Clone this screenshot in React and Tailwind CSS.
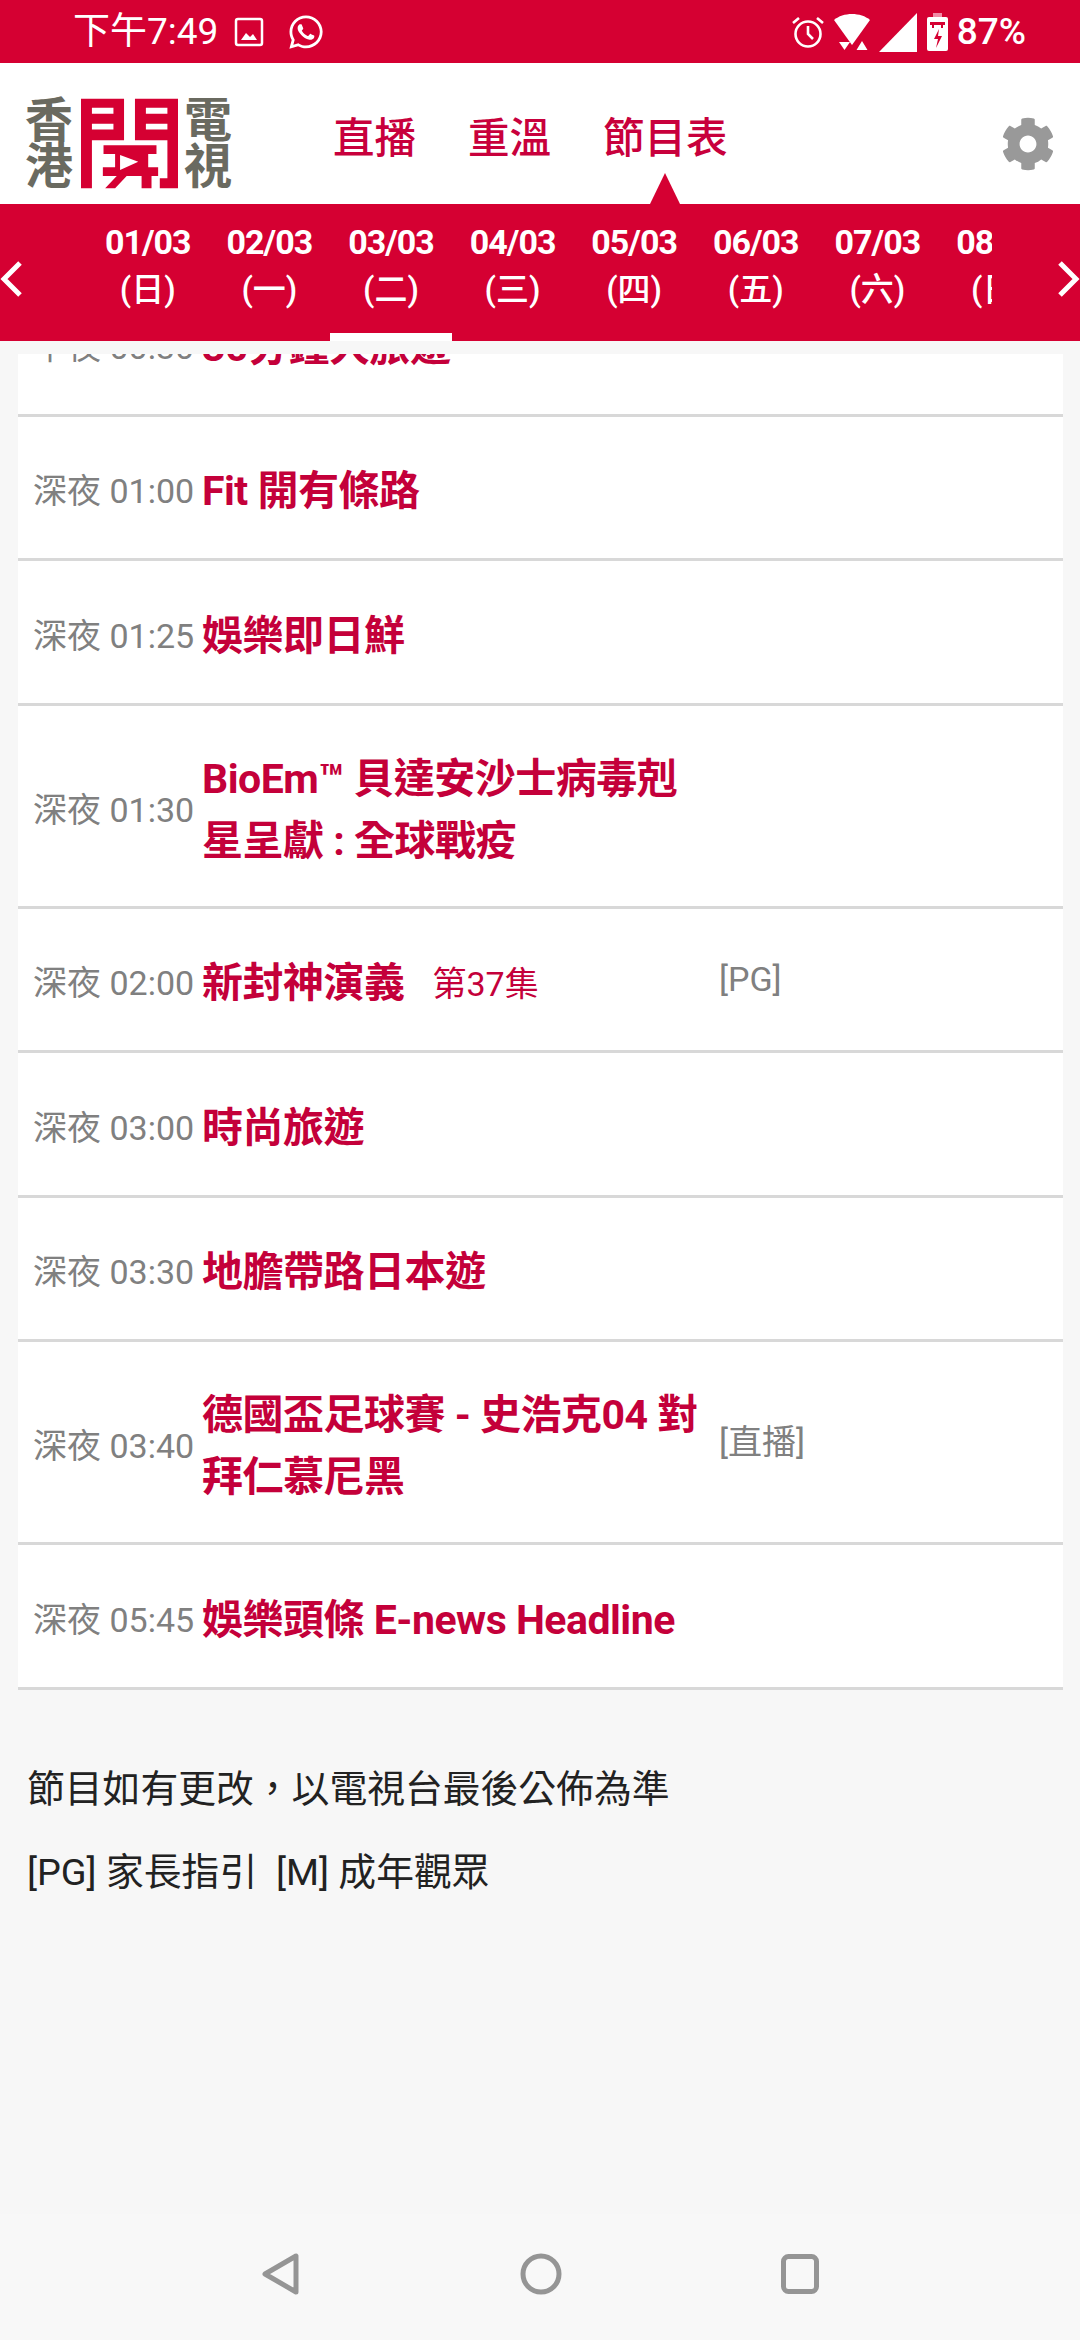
import React from 'react';
import { FaCog, FaWhatsapp } from 'react-icons/fa';

const FONT = '[font-family:Roboto,"Noto_Sans_CJK_TC",sans-serif]';

const DATES = [
  { date: '01/03', day: '(日)' },
  { date: '02/03', day: '(一)' },
  { date: '03/03', day: '(二)', active: true },
  { date: '04/03', day: '(三)' },
  { date: '05/03', day: '(四)' },
  { date: '06/03', day: '(五)' },
  { date: '07/03', day: '(六)' },
  { date: '08/03', day: '(日)' },
];

const ROWS = [
  { time: '午夜 00:30', title: '30分鐘大旅遊' },
  { time: '深夜 01:00', title: 'Fit 開有條路' },
  { time: '深夜 01:25', title: '娛樂即日鮮' },
  { time: '深夜 01:30', title: 'BioEm™ 貝達安沙士病毒剋星呈獻 : 全球戰疫', tall: true },
  { time: '深夜 02:00', title: '新封神演義', episode: '第37集', tag: '[PG]' },
  { time: '深夜 03:00', title: '時尚旅遊' },
  { time: '深夜 03:30', title: '地膽帶路日本遊' },
  { time: '深夜 03:40', title: '德國盃足球賽 - 史浩克04 對拜仁慕尼黑', tag: '[直播]', tall: true },
  { time: '深夜 05:45', title: '娛樂頭條 E-news Headline' },
];

const StatusBar = () => (
  <div className="flex h-[63px] items-center bg-[#d50032] pl-[73px] pr-[54px] text-white">
    <span className="text-[37px] leading-none">下午7:49</span>
    <svg className="ml-[16px] h-[30px] w-[30px]" viewBox="0 0 30 30">
      <rect x="2" y="2" width="26" height="26" rx="2" fill="none" stroke="white" strokeWidth="2.5" />
      <path d="M7 23l5-7 4 4 3-3 4 6z" fill="white" />
    </svg>
    <FaWhatsapp className="ml-[23px] text-[38px]" />
    <div className="ml-auto flex items-center">
      <svg className="h-[34px] w-[34px]" viewBox="0 0 34 34" fill="none" stroke="white" strokeWidth="2.6">
        <circle cx="17" cy="19" r="12.5" />
        <path d="M17 11v8l5 5M2 8l6-5M32 8l-6-5" />
      </svg>
      <svg className="ml-[6px] h-[42px] w-[42px]" viewBox="0 0 42 42" fill="white">
        <path d="M3 9C12 1 30 1 39 9L21 34Z" />
        <path d="M8 31h11l-5.500 8zM31 30l5.500 9h-11z" />
      </svg>
      <svg className="ml-[6px] h-[40px] w-[38px]" viewBox="0 0 38 40" fill="white">
        <path d="M38 1V40H0Z" />
      </svg>
      <svg className="ml-[9px] h-[38px] w-[23px]" viewBox="0 0 23 38">
        <rect x="7" y="0" width="9" height="4" fill="#f08aa5" />
        <rect x="1" y="4" width="21" height="34" rx="2" fill="white" />
        <path d="M4 9h15v3h-2v3h-2v-3H8v3H6v-3H4z" fill="#d50032" />
        <path d="M13 16l-5 10h4l-2 9 6-12h-4z" fill="#d50032" />
      </svg>
      <span className="ml-[8px] text-[37px] font-medium leading-none">87%</span>
    </div>
  </div>
);

const Logo = () => (
  <div className="mt-[20px] flex h-[92px] items-center font-bold text-[#6a6a60]">
    <div className="flex w-[56px] flex-col text-[48px] leading-[46px]">
      <span>香</span>
      <span>港</span>
    </div>
    <svg className="h-[91px] w-[97px]" viewBox="182 25 293 270">
      <g fill="#d50032">
        <path fillRule="evenodd" d="M182 25H312V150H215V295H182ZM215 52V70H280V52ZM215 100V118H280V100Z" />
        <path fillRule="evenodd" d="M345 25H475V295H420V265H443V150H345ZM378 52V70H443V52ZM378 100V118H443V100Z" />
        <path fillRule="evenodd" d="M250 165H410V192H385V232H415V258H395V295H365V258H320L285 295H255L290 258H248V232H285V192H250ZM300 195V240L355 215Z" />
      </g>
    </svg>
    <div className="ml-[6px] flex w-[51px] flex-col text-[48px] leading-[46px]">
      <span>電</span>
      <span>視</span>
    </div>
  </div>
);

const Header = () => (
  <div className="flex h-[141px] items-center bg-white pl-[25px]">
    <Logo />
    <nav className="relative ml-[98px] flex h-full items-center gap-[52px] pt-[12px] text-[41.500px] font-medium text-[#c8003c]">
      <span>直播</span>
      <span>重溫</span>
      <span>節目表</span>
      <span className="absolute bottom-0 left-[317px] h-0 w-0 border-x-[15px] border-b-[31px] border-x-transparent border-b-[#d50032]" />
    </nav>
    <FaCog className="ml-auto mr-[25px] mt-[20px] text-[54px] text-[#999999]" />
  </div>
);

const DateBar = () => (
  <div className="relative flex h-[137px] bg-[#d50032] text-white">
    <svg className="absolute left-0 top-[57px] h-[36px] w-[24px]" viewBox="0 0 24 36" fill="none" stroke="white" strokeWidth="5">
      <path d="M20 2L4 18l16 16" />
    </svg>
    <div className="ml-[87px] flex w-[905px] overflow-hidden">
      {DATES.map((item) => (
        <div
          key={item.date}
          className={`flex h-[137px] w-[121.6px] shrink-0 flex-col items-center pt-[15px] ${item.active ? 'border-b-[8px] border-white' : ''}`}
        >
          <span className="text-[34px] font-bold leading-[46px] tracking-[-1px]">{item.date}</span>
          <span className="text-[33px] font-medium leading-[50px]">{item.day}</span>
        </div>
      ))}
    </div>
    <svg className="absolute right-0 top-[57px] h-[36px] w-[24px]" viewBox="0 0 24 36" fill="none" stroke="white" strokeWidth="5">
      <path d="M4 2l16 16L4 34" />
    </svg>
  </div>
);

const Row = ({ time, title, episode, tag, tall }) => (
  <div className={`flex items-center border-b-[3px] border-[#d8d8d8] pl-[15px] pt-[8px] ${tall ? 'h-[203px]' : 'h-[144.500px]'}`}>
    <span className="w-[169px] shrink-0 text-[34px] leading-none text-[#808080]">{time}</span>
    <div className="flex w-[517px] shrink-0 items-center">
      <span className="max-w-[500px] text-[41px] font-bold leading-[62px] tracking-[-0.5px] text-[#c4003a]">{title}</span>
      {episode && <span className="ml-[28px] mt-[3px] text-[34px] text-[#c4003a]">{episode}</span>}
    </div>
    {tag && <span className="-mt-[8px] text-[34px] leading-none text-[#808080]">{tag}</span>}
  </div>
);

const NavBar = () => (
  <div className="mt-auto flex h-[126px] items-center justify-center gap-[219px] bg-[#f8f8f8] pb-[6px]">
    <svg className="h-[42px] w-[40px]" viewBox="0 0 40 42" fill="none" stroke="#959595" strokeWidth="5" strokeLinejoin="round">
      <path d="M35 3V39L4 21Z" />
    </svg>
    <svg className="h-[42px] w-[42px]" viewBox="0 0 42 42" fill="none" stroke="#959595" strokeWidth="5">
      <circle cx="21" cy="21" r="18" />
    </svg>
    <svg className="h-[40px] w-[38px]" viewBox="0 0 38 40" fill="none" stroke="#959595" strokeWidth="5">
      <rect x="2.500" y="2.500" width="33" height="35" rx="5" />
    </svg>
  </div>
);

const App = () => (
  <div className={`flex h-[2340px] w-[1080px] flex-col overflow-hidden bg-[#f7f7f7] ${FONT}`}>
    <StatusBar />
    <Header />
    <DateBar />
    <div className="ml-[18px] mr-[17px] mt-[13px] overflow-hidden bg-white">
      <div className="-mt-[82px]">
        {ROWS.map((row) => (
          <Row key={row.time} {...row} />
        ))}
      </div>
    </div>
    <div className="mt-[58px] pl-[27px] text-[37.800px] leading-[83px] text-[#222222]">
      <p>節目如有更改，以電視台最後公佈為準</p>
      <p>[PG] 家長指引&nbsp;&nbsp;[M] 成年觀眾</p>
    </div>
    <NavBar />
  </div>
);

export default App;
